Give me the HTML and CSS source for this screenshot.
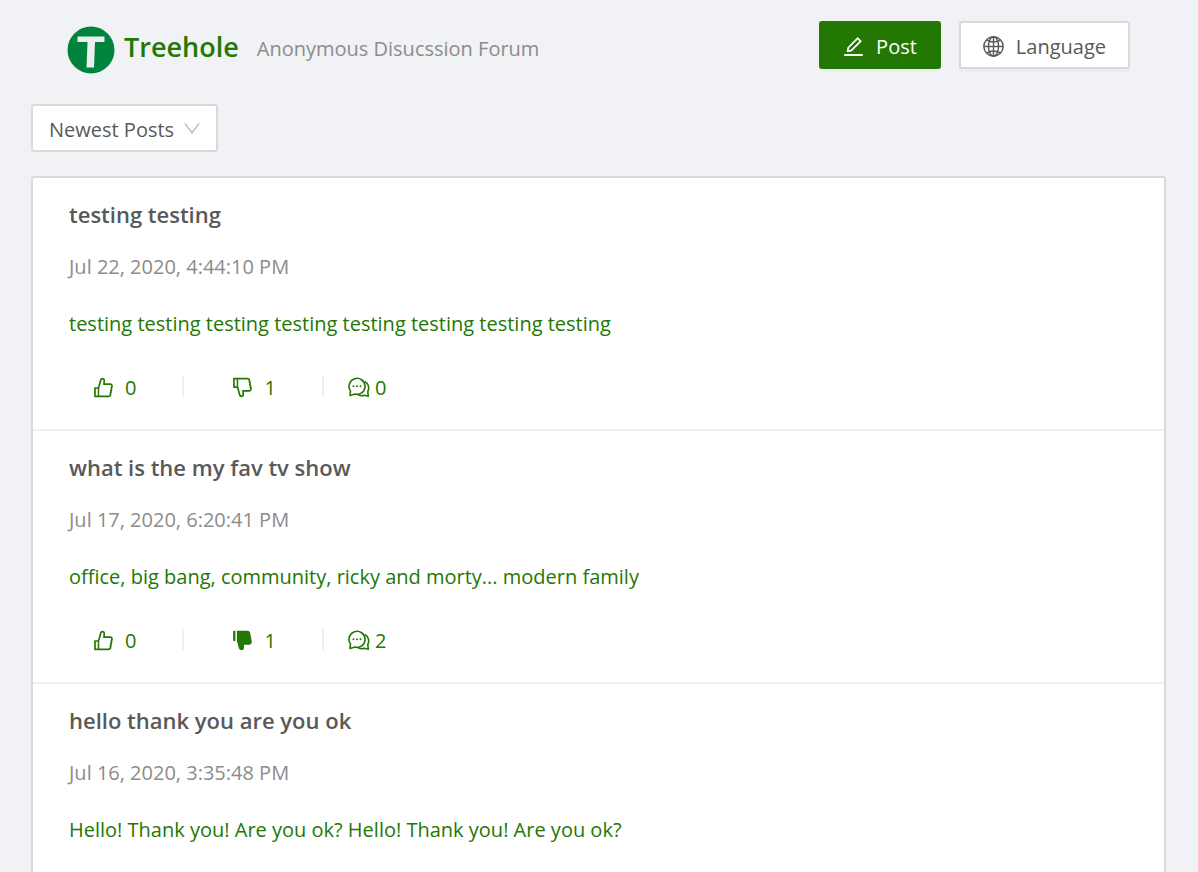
FILE: index.html
```html
<!DOCTYPE html>
<html lang="en">
<head>
    <meta charset="UTF-8">
    <meta name="viewport" content="width=device-width, initial-scale=1.0">
    <title>Treehole</title>
    <link rel="stylesheet" href="styles.css">
</head>
<body>
    <!-- shared icons -->
    <svg class="sprite" aria-hidden="true">
        <symbol id="icon-like" viewBox="64 64 896 896">
            <path d="M885.9 533.7c16.8-22.2 26.1-49.4 26.1-77.7 0-44.9-25.1-87.4-65.5-111.1a67.67 67.67 0 00-34.3-9.3H572.4l6-122.9c1.4-29.7-9.1-57.9-29.5-79.4A106.62 106.62 0 00471 99.9c-52 0-98 35-111.8 85.1l-85.9 311H144c-17.7 0-32 14.3-32 32v364c0 17.7 14.3 32 32 32h601.3c9.2 0 18.2-1.8 26.5-5.4 47.6-20.3 78.3-66.8 78.3-118.4 0-12.6-1.8-25-5.4-37 16.8-22.2 26.1-49.4 26.1-77.7 0-12.6-1.8-25-5.4-37 16.8-22.2 26.1-49.4 26.1-77.7-.2-12.6-2-25.1-5.6-37.1zM184 852V568h81v284h-81zm636.4-353l-21.9 19 13.9 25.4a56.2 56.2 0 016.9 27.3c0 16.5-7.2 32.2-19.6 43l-21.9 19 13.9 25.4a56.2 56.2 0 016.9 27.3c0 16.5-7.2 32.2-19.6 43l-21.9 19 13.9 25.4a56.2 56.2 0 016.9 27.3c0 22.4-13.2 42.6-33.6 51.8H329V564.8l99.5-360.5a44.1 44.1 0 0142.2-32.3c7.6 0 15.1 2.2 21.1 6.7 9.9 7.4 15.2 18.6 14.6 30.5l-9.6 198.4h314.4C829 418.5 840 436.9 840 456c0 16.5-7.2 32.1-19.6 43z"/>
        </symbol>
        <symbol id="icon-dislike" viewBox="64 64 896 896">
            <path transform="matrix(1 0 0 -1 0 1024)" d="M885.9 533.7c16.8-22.2 26.1-49.4 26.1-77.7 0-44.9-25.1-87.4-65.5-111.1a67.67 67.67 0 00-34.3-9.3H572.4l6-122.9c1.4-29.7-9.1-57.9-29.5-79.4A106.62 106.62 0 00471 99.9c-52 0-98 35-111.8 85.1l-85.9 311H144c-17.7 0-32 14.3-32 32v364c0 17.7 14.3 32 32 32h601.3c9.2 0 18.2-1.8 26.5-5.4 47.6-20.3 78.3-66.8 78.3-118.4 0-12.6-1.8-25-5.4-37 16.8-22.2 26.1-49.4 26.1-77.7 0-12.6-1.8-25-5.4-37 16.8-22.2 26.1-49.4 26.1-77.7-.2-12.6-2-25.1-5.6-37.1zM184 852V568h81v284h-81zm636.4-353l-21.9 19 13.9 25.4a56.2 56.2 0 016.9 27.3c0 16.5-7.2 32.2-19.6 43l-21.9 19 13.9 25.4a56.2 56.2 0 016.9 27.3c0 16.5-7.2 32.2-19.6 43l-21.9 19 13.9 25.4a56.2 56.2 0 016.9 27.3c0 22.4-13.2 42.6-33.6 51.8H329V564.8l99.5-360.5a44.1 44.1 0 0142.2-32.3c7.6 0 15.1 2.2 21.1 6.7 9.9 7.4 15.2 18.6 14.6 30.5l-9.6 198.4h314.4C829 418.5 840 436.9 840 456c0 16.5-7.2 32.1-19.6 43z"/>
        </symbol>
        <symbol id="icon-dislike-filled" viewBox="64 64 896 896">
            <path transform="matrix(1 0 0 -1 0 1024)" d="M112 528v364c0 17.7 14.3 32 32 32h65V496h-65c-17.7 0-32 14.3-32 32zM885.9 533.7c16.8-22.2 26.1-49.4 26.1-77.7 0-44.9-25.1-87.4-65.5-111.1a67.67 67.67 0 00-34.3-9.3H572.4l6-122.9c1.4-29.7-9.1-57.9-29.5-79.4A106.62 106.62 0 00471 99.9c-52 0-98 35-111.8 85.1l-85.9 311v428h472c9.2 0 18.2-1.8 26.5-5.4 47.6-20.3 78.3-66.8 78.3-118.4 0-12.6-1.8-25-5.4-37 16.8-22.2 26.1-49.4 26.1-77.7 0-12.6-1.8-25-5.4-37 16.8-22.2 26.1-49.4 26.1-77.7-.2-12.6-2-25.1-5.6-37.1z"/>
        </symbol>
        <symbol id="icon-comments" viewBox="0 0 22 22">
            <g fill="none" stroke="currentColor" stroke-width="1.600" stroke-linejoin="round">
                <path d="M2.500 14A8 8 0 1 1 7 17.100L2 18.500z"/>
                <path d="M16.800 4.400A7.600 7.600 0 0 1 19.800 14.600l.5 4.700-3.900-1.100A7.500 7.500 0 0 1 10 17.600"/>
            </g>
            <circle cx="5.500" cy="9.300" r="1"/>
            <circle cx="9" cy="9.300" r="1"/>
            <circle cx="12.500" cy="9.300" r="1"/>
        </symbol>
    </svg>

    <header class="header">
        <svg class="logo" viewBox="0 0 48 48" role="img" aria-label="Treehole logo">
            <circle cx="24" cy="24" r="23.500" fill="#00843d"/>
            <path d="M10.500 10.500h27v5.500h-9.500l-1 25.500h-7.500l1-25.500h-10z" fill="#e9eff0"/>
        </svg>
        <h1 class="title">Treehole</h1>
        <span class="subtitle">Anonymous Disucssion Forum</span>
        <div class="header-actions">
            <button type="button" class="btn btn-primary">
                <svg class="icon" viewBox="64 64 896 896" aria-hidden="true">
                    <path d="M257.7 752c2 0 4-.2 6-.5L431.9 722c2-.4 3.9-1.3 5.3-2.8l423.9-423.9a9.96 9.96 0 000-14.1L694.9 114.9c-1.9-1.9-4.4-2.9-7.1-2.9s-5.2 1-7.1 2.9L256.8 538.8c-1.5 1.5-2.4 3.3-2.8 5.3l-29.5 168.2a33.5 33.5 0 009.4 29.8c6.6 6.4 14.9 9.9 23.8 9.9zm67.4-174.4L687.8 215l73.3 73.3-362.7 362.6-88.9 15.7 15.6-89zM880 836H144c-17.7 0-32 14.3-32 32v36c0 4.4 3.6 8 8 8h784c4.4 0 8-3.6 8-8v-36c0-17.7-14.3-32-32-32z"/>
                </svg>
                Post
            </button>
            <button type="button" class="btn">
                <svg class="icon" viewBox="0 0 21 21" aria-hidden="true">
                    <g fill="none" stroke="currentColor" stroke-width="1.400">
                        <circle cx="10.500" cy="10.500" r="9.700"/>
                        <ellipse cx="10.500" cy="10.500" rx="5" ry="9.700"/>
                        <path d="M10.500 1v19M1 10.500h19M3.500 4.200q7 3.600 14 0M3.500 16.800q7-3.600 14 0"/>
                    </g>
                </svg>
                Language
            </button>
        </div>
    </header>

    <main class="content">
        <div class="sort">
            <select class="sort-select" aria-label="Sort posts">
                <option>Newest Posts</option>
                <option>Oldest Posts</option>
            </select>
            <svg class="sort-arrow" viewBox="0 0 16 16" aria-hidden="true">
                <path d="M1 2.500l7 9.500 7-9.500" fill="none" stroke="currentColor" stroke-width="1.500"/>
            </svg>
        </div>

        <div class="posts">
            <article class="post">
                <h2 class="post-title">testing testing</h2>
                <p class="post-date">Jul 22, 2020, 4:44:10 PM</p>
                <p class="post-text">testing testing testing testing testing testing testing testing</p>
                <ul class="actions">
                    <li><button type="button" class="vote" aria-label="Like"><svg class="icon"><use href="#icon-like"/></svg>0</button></li>
                    <li><button type="button" class="vote" aria-label="Dislike"><svg class="icon"><use href="#icon-dislike"/></svg>1</button></li>
                    <li><a href="#" class="comments" aria-label="Comments"><svg class="icon icon-comments"><use href="#icon-comments"/></svg>0</a></li>
                </ul>
            </article>
            <article class="post">
                <h2 class="post-title">what is the my fav tv show</h2>
                <p class="post-date">Jul 17, 2020, 6:20:41 PM</p>
                <p class="post-text">office, big bang, community, ricky and morty... modern family</p>
                <ul class="actions">
                    <li><button type="button" class="vote" aria-label="Like"><svg class="icon"><use href="#icon-like"/></svg>0</button></li>
                    <li><button type="button" class="vote" aria-label="Dislike"><svg class="icon"><use href="#icon-dislike-filled"/></svg>1</button></li>
                    <li><a href="#" class="comments" aria-label="Comments"><svg class="icon icon-comments"><use href="#icon-comments"/></svg>2</a></li>
                </ul>
            </article>
            <article class="post">
                <h2 class="post-title">hello thank you are you ok</h2>
                <p class="post-date">Jul 16, 2020, 3:35:48 PM</p>
                <p class="post-text">Hello! Thank you! Are you ok? Hello! Thank you! Are you ok?</p>
            </article>
        </div>
    </main>
</body>
</html>
```
FILE: styles.css
```css
* {
    box-sizing: border-box;
}
body {
    margin: 0;
    background-color: #f0f2f5;
    color: #595959;
    font-family: "Open Sans", sans-serif;
    font-size: 20px;
    font-weight: 400;
    line-height: 33px;
}
button, select {
    font: inherit;
    color: inherit;
    cursor: pointer;
}
.sprite {
    display: none;
}
.icon {
    width: 21px;
    height: 21px;
    flex: none;
    fill: currentColor;
}
.header {
    display: flex;
    align-items: center;
    padding: 18px 68px 30px 67px;
}
.logo {
    width: 48px;
    height: 48px;
    margin-top: 8px;
}
.title {
    margin: 0 18px 0 9px;
    color: #237804;
    font-size: 27px;
    font-weight: 600;
}
.subtitle {
    margin-top: 4px;
    color: #8c8c8c;
}
.header-actions {
    display: flex;
    gap: 18px;
    margin-left: auto;
    margin-bottom: 2px;
}
.btn {
    display: flex;
    align-items: center;
    gap: 12px;
    height: 48px;
    padding: 2px 22px 0;
    background: #fff;
    border: 2px solid #d9d9d9;
    border-radius: 3px;
    box-shadow: 0 3px 0 rgba(0, 0, 0, 0.02);
}
.btn-primary {
    background: #237804;
    border-color: #237804;
    color: #fff;
}
.content {
    padding: 0 32px 32px 31px;
}
.sort {
    display: inline-block;
    position: relative;
    vertical-align: top;
    margin-bottom: 24px;
}
.sort-select {
    display: block;
    height: 48px;
    padding: 2px 41px 0 16px;
    appearance: none;
    background: #fff;
    border: 2px solid #d9d9d9;
    border-radius: 3px;
}
.sort-arrow {
    position: absolute;
    right: 18px;
    top: 17px;
    width: 16px;
    height: 16px;
    color: #bfbfbf;
    pointer-events: none;
}
.posts {
    background: #fff;
    border: 2px solid #d9d9d9;
    border-radius: 3px;
}
.post {
    padding: 20px 36px 25px;
    border-bottom: 2px solid #f0f0f0;
}
.post:last-child {
    border-bottom: none;
}
.post-title {
    margin: 0 0 19px;
    font-size: 22px;
    font-weight: 600;
}
.post-date {
    margin: 0 0 24px;
    color: #8c8c8c;
}
.post-text {
    margin: 0 0 31px;
    color: #237804;
}
.actions {
    display: flex;
    margin: 0;
    padding: 0;
    list-style: none;
    color: #237804;
}
.actions li {
    display: flex;
    align-items: center;
    position: relative;
    padding: 0 24px;
}
.actions li:first-child {
    padding-left: 0;
}
.actions li:not(:last-child)::after {
    content: "";
    position: absolute;
    right: 0;
    top: 5px;
    width: 2px;
    height: 21px;
    background: #f0f0f0;
}
.vote {
    display: flex;
    align-items: center;
    gap: 11px;
    padding: 0 24px;
    background: none;
    border: none;
}
.comments {
    display: flex;
    align-items: center;
    gap: 5px;
    color: inherit;
    text-decoration: none;
}
.icon-comments {
    width: 22px;
    height: 22px;
}
```
